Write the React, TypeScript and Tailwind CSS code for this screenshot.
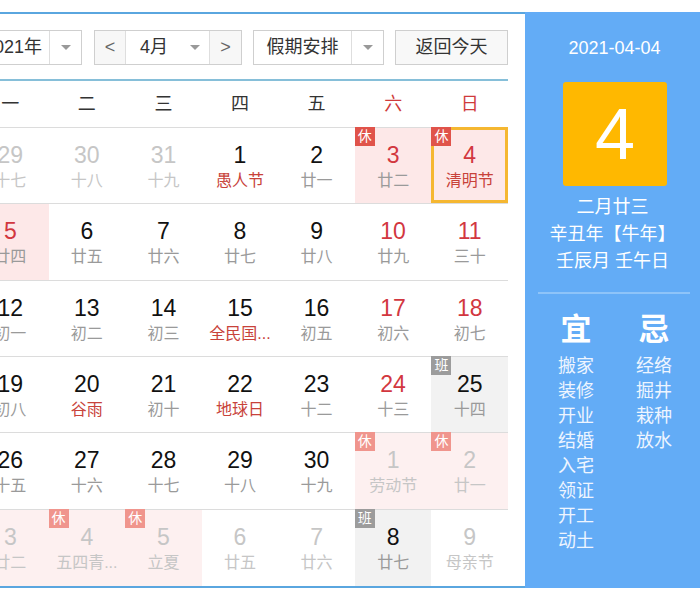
import React from "react"

type Day = {
  n: number
  sub: string
  dim?: boolean
  red?: boolean
  holiday?: boolean
  badge?: "休" | "班"
  bg?: "rest" | "work"
  today?: boolean
}

const rows: Day[][] = [
  [
    { n: 29, sub: "十七", dim: true },
    { n: 30, sub: "十八", dim: true },
    { n: 31, sub: "十九", dim: true },
    { n: 1, sub: "愚人节", holiday: true },
    { n: 2, sub: "廿一" },
    { n: 3, sub: "廿二", red: true, badge: "休", bg: "rest" },
    { n: 4, sub: "清明节", red: true, holiday: true, badge: "休", bg: "rest", today: true },
  ],
  [
    { n: 5, sub: "廿四", red: true, bg: "rest" },
    { n: 6, sub: "廿五" },
    { n: 7, sub: "廿六" },
    { n: 8, sub: "廿七" },
    { n: 9, sub: "廿八" },
    { n: 10, sub: "廿九", red: true },
    { n: 11, sub: "三十", red: true },
  ],
  [
    { n: 12, sub: "初一" },
    { n: 13, sub: "初二" },
    { n: 14, sub: "初三" },
    { n: 15, sub: "全民国...", holiday: true },
    { n: 16, sub: "初五" },
    { n: 17, sub: "初六", red: true },
    { n: 18, sub: "初七", red: true },
  ],
  [
    { n: 19, sub: "初八" },
    { n: 20, sub: "谷雨", holiday: true },
    { n: 21, sub: "初十" },
    { n: 22, sub: "地球日", holiday: true },
    { n: 23, sub: "十二" },
    { n: 24, sub: "十三", red: true },
    { n: 25, sub: "十四", badge: "班", bg: "work" },
  ],
  [
    { n: 26, sub: "十五" },
    { n: 27, sub: "十六" },
    { n: 28, sub: "十七" },
    { n: 29, sub: "十八" },
    { n: 30, sub: "十九" },
    { n: 1, sub: "劳动节", dim: true, badge: "休", bg: "rest" },
    { n: 2, sub: "廿一", dim: true, badge: "休", bg: "rest" },
  ],
  [
    { n: 3, sub: "廿二", dim: true, bg: "rest" },
    { n: 4, sub: "五四青...", dim: true, badge: "休", bg: "rest" },
    { n: 5, sub: "立夏", dim: true, badge: "休", bg: "rest" },
    { n: 6, sub: "廿五", dim: true },
    { n: 7, sub: "廿六", dim: true },
    { n: 8, sub: "廿七", badge: "班", bg: "work" },
    { n: 9, sub: "母亲节", dim: true },
  ],
]

const weekdays = ["一", "二", "三", "四", "五", "六", "日"]
const good = ["搬家", "装修", "开业", "结婚", "入宅", "领证", "开工", "动土"]
const bad = ["经络", "掘井", "栽种", "放水"]

const Arrow = () => (
  <span className="w-0 h-0 border-l-[5px] border-r-[5px] border-t-[5px] border-l-transparent border-r-transparent border-t-[#999]" />
)

const DayCell: React.FC<{ d: Day; last: boolean }> = ({ d, last }) => {
  let bg = "bg-white"
  if (d.bg === "rest") bg = d.dim ? "bg-[#fdf0f0]" : "bg-[#fde8e8]"
  if (d.bg === "work") bg = "bg-[#f2f2f2]"
  const numColor = d.dim ? "text-[#c6c6c6]" : d.red ? "text-[#d2373f]" : "text-[#111]"
  const subColor = d.dim ? "text-[#c6c6c6]" : d.holiday ? "text-[#c8423a]" : "text-[#9a9a9a]"
  let badgeColor = "bg-[#e0534a]"
  if (d.badge === "班") badgeColor = "bg-[#9c9c9c]"
  if (d.badge === "休" && d.dim) badgeColor = "bg-[#f0958d]"
  return (
    <div className={`relative flex flex-col items-center pt-[14px] ${bg} ${last ? "" : "border-b border-[#dcdcdc]"}`}>
      {d.today && <div className="absolute inset-0 top-[-1px] border-[3px] border-[#f5b731]" />}
      {d.badge && (
        <span className={`absolute left-0 top-[-1px] w-[20px] h-[19px] text-[14px] leading-[19px] text-center text-white ${badgeColor}`}>
          {d.badge}
        </span>
      )}
      <span className={`text-[23px] leading-[26px] ${numColor}`}>{d.n}</span>
      <span className={`text-[16px] leading-[26px] whitespace-nowrap ${subColor}`}>{d.sub}</span>
    </div>
  )
}

export default function App() {
  return (
    <div
      className="w-[700px] h-[600px] bg-white overflow-hidden pt-[12px]"
      style={{ fontFamily: '"Liberation Sans", "Noto Sans CJK SC", sans-serif' }}
    >
      <div className="flex h-[576px]">
        <div className="ml-[-40px] w-[565px] shrink-0 flex flex-col border-t-2 border-b-2 border-[#5aa6df] pl-[12px] pr-[17px] bg-white">
          <div className="h-[67px] shrink-0 flex items-center pt-[2px] border-b-2 border-[#86bfd9] text-[18px] text-[#333]">
            <div className="w-[110px] h-[35px] flex border border-[#cfcfcf] bg-white">
              <span className="flex-1 flex items-center justify-center pl-[4px]">2021年</span>
              <span className="w-[32px] flex items-center justify-center border-l border-[#dedede]"><Arrow /></span>
            </div>
            <div className="ml-[12px] w-[148px] h-[35px] flex border border-[#cfcfcf] bg-white">
              <span className="w-[31px] flex items-center justify-center border-r border-[#dedede] bg-[#f7f7f7] text-[#666]">&lt;</span>
              <span className="flex-1 flex items-center pl-[14px] gap-[22px]">4月<Arrow /></span>
              <span className="w-[32px] flex items-center justify-center border-l border-[#dedede] bg-[#f7f7f7] text-[#666]">&gt;</span>
            </div>
            <div className="ml-[11px] w-[131px] h-[35px] flex border border-[#cfcfcf] bg-white">
              <span className="flex-1 flex items-center justify-center">假期安排</span>
              <span className="w-[32px] flex items-center justify-center border-l border-[#dedede]"><Arrow /></span>
            </div>
            <div className="ml-[11px] w-[113px] h-[35px] flex items-center justify-center border border-[#cfcfcf] bg-[#f8f8f8]">
              返回今天
            </div>
          </div>
          <div className="h-[47px] shrink-0 grid grid-cols-7 border-b border-[#dcdcdc]">
            {weekdays.map((w, i) => (
              <div key={w} className={`flex items-center justify-center text-[18px] ${i > 4 ? "text-[#cf3b3b]" : "text-[#333]"}`}>
                {w}
              </div>
            ))}
          </div>
          <div className="flex-1 grid grid-cols-7 grid-rows-6">
            {rows.map((r, ri) => r.map((d, ci) => <DayCell key={`${ri}-${ci}`} d={d} last={ri === 5} />))}
          </div>
        </div>
        <div className="w-[175px] shrink-0 bg-[#63acf6] flex flex-col text-white">
          <div className="pt-[24px] text-[18px] leading-[24px] text-center pl-[4px]">2021-04-04</div>
          <div className="mt-[22px] ml-[38px] w-[104px] h-[104px] rounded-[3px] bg-[#ffb800] flex items-center justify-center text-[72px] leading-none">
            4
          </div>
          <div className="mt-[8px] text-[18px] leading-[27px] text-center">
            <div>二月廿三</div>
            <div>辛丑年【牛年】</div>
            <div>壬辰月 壬午日</div>
          </div>
          <div className="mt-[17px] ml-[13px] w-[152px] h-[2px] bg-[#8ec4f9]" />
          <div className="mt-[18px] flex pl-[31px] gap-[38px]">
            <div className="w-[40px] flex flex-col items-center">
              <span className="text-[31px] leading-[36px] font-bold">宜</span>
              <div className="mt-[6px] flex flex-col text-[18px] leading-[25px] text-[#eef5ff]">
                {good.map(g => <span key={g}>{g}</span>)}
              </div>
            </div>
            <div className="w-[40px] flex flex-col items-center">
              <span className="text-[31px] leading-[36px] font-bold">忌</span>
              <div className="mt-[6px] flex flex-col text-[18px] leading-[25px] text-[#eef5ff]">
                {bad.map(g => <span key={g}>{g}</span>)}
              </div>
            </div>
          </div>
        </div>
      </div>
    </div>
  )
}
